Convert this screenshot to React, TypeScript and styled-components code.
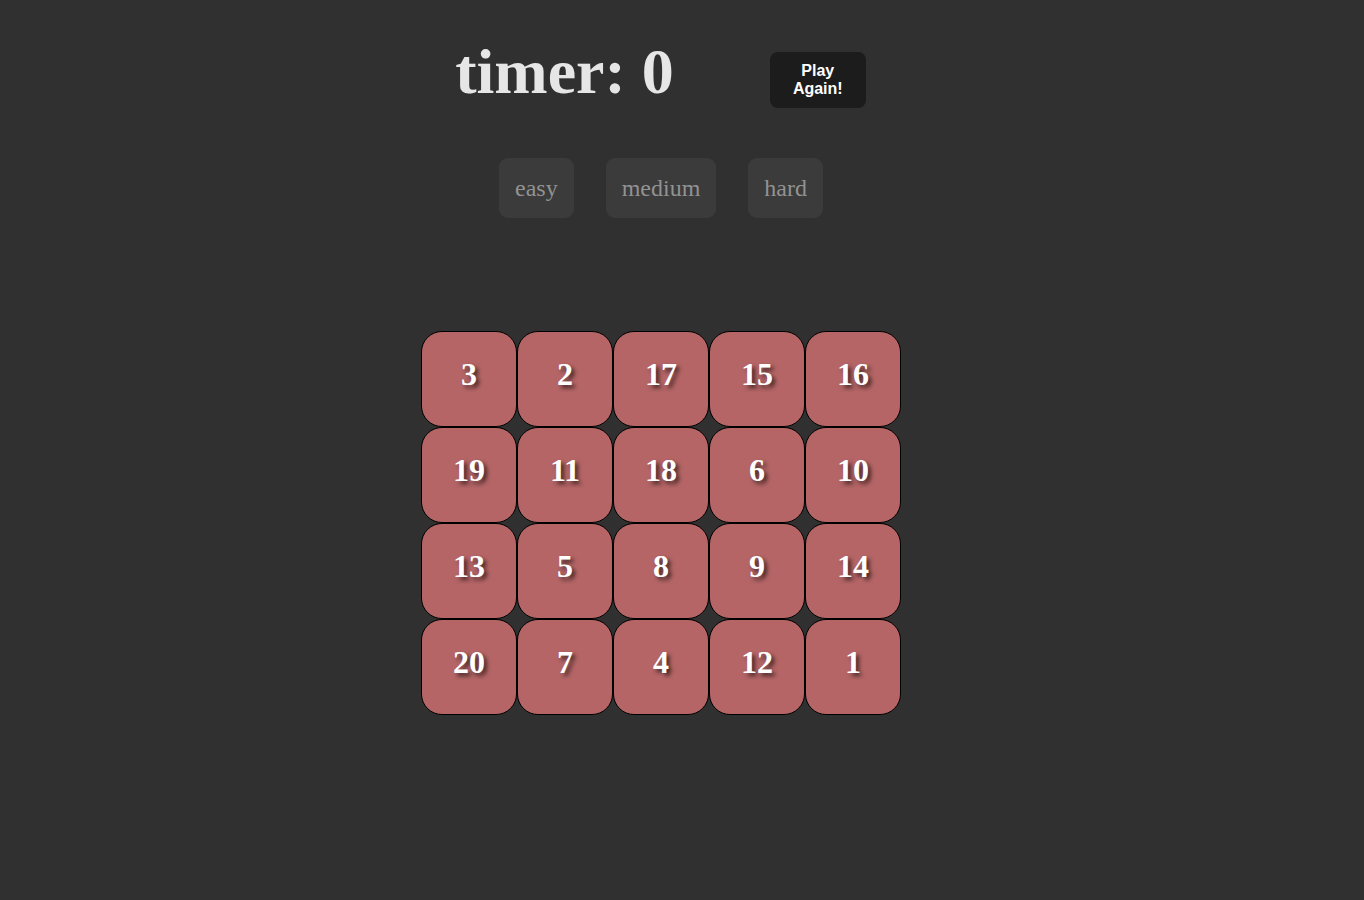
import React from "react";
import styled, { createGlobalStyle } from "styled-components";

const GlobalStyle = createGlobalStyle`
  html, body {
    margin: 0;
    padding: 0;
    background: #303030;
  }
  body {
    font-family: "Liberation Serif", "Times New Roman", serif;
    min-height: 900px;
  }
`;

const Page = styled.div`
  display: flex;
  flex-direction: column;
  align-items: center;
  padding: 35px 42px 0 0;
`;

const Header = styled.div`
  display: flex;
  align-items: flex-start;
  gap: 96px;
  margin-right: 1px;
`;

const Timer = styled.h1`
  margin: 0;
  font-family: "Liberation Serif", "Times New Roman", serif;
  font-weight: bold;
  font-size: 64px;
  line-height: normal;
  color: #e6e6e6;
`;

const PlayButton = styled.button`
  margin-top: 17px;
  width: 96px;
  height: 56px;
  padding: 0 16px;
  border: none;
  border-radius: 8px;
  background: #1c1c1c;
  color: #ffffff;
  font-family: "Liberation Sans", Arial, sans-serif;
  font-weight: bold;
  font-size: 16px;
  line-height: 18px;
  cursor: pointer;
`;

const Levels = styled.div`
  display: flex;
  gap: 32px;
  margin-top: 49px;
`;

const LevelButton = styled.button`
  padding: 16px;
  border: none;
  border-radius: 9px;
  background: #3b3b3b;
  color: #929292;
  font-family: "Liberation Serif", "Times New Roman", serif;
  font-size: 24px;
  line-height: 28px;
  cursor: pointer;
`;

const Board = styled.div`
  display: grid;
  grid-template-columns: repeat(5, 96px);
  grid-auto-rows: 96px;
  margin-top: 113px;
`;

const Tile = styled.div`
  box-sizing: border-box;
  display: flex;
  align-items: center;
  justify-content: center;
  padding-bottom: 10px;
  border: 1px solid #000;
  border-radius: 21px;
  background: #b56566;
  color: #ffffff;
  font-family: "Liberation Serif", "Times New Roman", serif;
  font-weight: bold;
  font-size: 32px;
  text-shadow: 3px 3px 4px rgba(0, 0, 0, 0.65);
  user-select: none;
`;

const tiles = [3, 2, 17, 15, 16, 19, 11, 18, 6, 10, 13, 5, 8, 9, 14, 20, 7, 4, 12, 1];

export default function App() {
  return (
    <>
      <GlobalStyle />
      <Page>
        <Header>
          <Timer>timer: 0</Timer>
          <PlayButton>Play Again!</PlayButton>
        </Header>
        <Levels>
          <LevelButton>easy</LevelButton>
          <LevelButton>medium</LevelButton>
          <LevelButton>hard</LevelButton>
        </Levels>
        <Board>
          {tiles.map((n) => (
            <Tile key={n}>{n}</Tile>
          ))}
        </Board>
      </Page>
    </>
  );
}
